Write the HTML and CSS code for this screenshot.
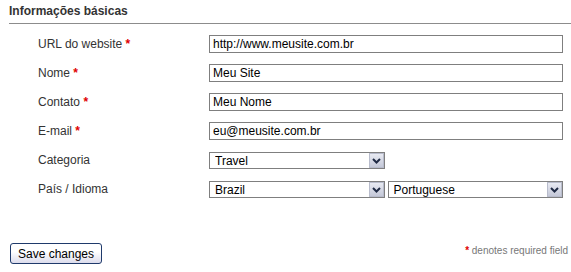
FILE: index.html
```html
<!DOCTYPE html>
<html lang="pt-BR">
<head>
    <meta charset="UTF-8">
    <title>Informações básicas</title>
    <link rel="stylesheet" href="styles.css">
</head>
<body>
    <h2 class="section-title">Informações básicas</h2>

    <form class="basic-form">
        <div class="fields">
            <label class="field-label">URL do website <span class="req">*</span></label>
            <div class="field"><input class="text-input" type="text" value="http://www.meusite.com.br"></div>

            <label class="field-label">Nome <span class="req">*</span></label>
            <div class="field"><input class="text-input" type="text" value="Meu Site"></div>

            <label class="field-label">Contato <span class="req">*</span></label>
            <div class="field"><input class="text-input" type="text" value="Meu Nome"></div>

            <label class="field-label">E-mail <span class="req">*</span></label>
            <div class="field"><input class="text-input" type="text" value="eu@meusite.com.br"></div>

            <label class="field-label">Categoria</label>
            <div class="field">
                <div class="select-wrap">
                    <select class="select-input"><option>Travel</option></select>
                    <span class="select-arrow"><svg width="9" height="6" viewBox="0 0 9 6"><path d="M1 1 L4.5 4.5 L8 1" fill="none" stroke="#1f2a44" stroke-width="2"/></svg></span>
                </div>
            </div>

            <label class="field-label">País / Idioma</label>
            <div class="field field-pair">
                <div class="select-wrap">
                    <select class="select-input"><option>Brazil</option></select>
                    <span class="select-arrow"><svg width="9" height="6" viewBox="0 0 9 6"><path d="M1 1 L4.5 4.5 L8 1" fill="none" stroke="#1f2a44" stroke-width="2"/></svg></span>
                </div>
                <div class="select-wrap">
                    <select class="select-input"><option>Portuguese</option></select>
                    <span class="select-arrow"><svg width="9" height="6" viewBox="0 0 9 6"><path d="M1 1 L4.5 4.5 L8 1" fill="none" stroke="#1f2a44" stroke-width="2"/></svg></span>
                </div>
            </div>
        </div>

        <div class="form-footer">
            <button type="button" class="save-btn">Save changes</button>
            <p class="req-note"><span class="req">*</span> denotes required field</p>
        </div>
    </form>
</body>
</html>
```

FILE: styles.css
```css
body {
    margin: 0;
    padding: 4px 0 0 9px;
    font-family: 'Liberation Sans', Arial, sans-serif;
    font-size: 12px;
    color: #333;
    background: #fff;
}

.section-title {
    margin: 0;
    padding: 0 0 5px 0;
    font-size: 12px;
    font-weight: bold;
    color: #333;
    border-bottom: 1px solid #8c8c8c;
}

.basic-form {
    margin: 0;
}

.fields {
    display: grid;
    grid-template-columns: 171px 354px;
    grid-auto-rows: 29px;
    padding: 11px 0 0 29px;
}

.field-label {
    display: block;
    height: 18px;
    line-height: 18px;
    color: #333;
}

.req {
    color: #e00000;
    font-weight: bold;
}

.field {
    display: flex;
    height: 18px;
}

.text-input {
    box-sizing: border-box;
    width: 100%;
    height: 18px;
    margin: 0;
    padding: 0 3px;
    border: 1px solid #7f7f7f;
    font-family: 'Liberation Sans', Arial, sans-serif;
    font-size: 12px;
    color: #000;
    background: #fff;
}

.select-wrap {
    position: relative;
    width: 176px;
    height: 17px;
    margin-top: 1px;
}

.field-pair {
    gap: 3px;
}

.select-input {
    appearance: none;
    -webkit-appearance: none;
    box-sizing: border-box;
    width: 100%;
    height: 17px;
    margin: 0;
    padding: 0 0 0 5px;
    border: 1px solid #7f7f7f;
    border-radius: 0;
    font-family: 'Liberation Sans', Arial, sans-serif;
    font-size: 12px;
    color: #000;
    background: #fff;
}

.select-arrow {
    position: absolute;
    top: 1px;
    right: 1px;
    width: 15px;
    height: 15px;
    box-sizing: border-box;
    border: 1px solid #b8bccc;
    background: linear-gradient(#e8eaf2, #c4c8d8);
    display: flex;
    align-items: center;
    justify-content: center;
    pointer-events: none;
}

.form-footer {
    display: flex;
    justify-content: space-between;
    align-items: center;
    margin-top: 34px;
    padding-right: 3px;
}

.save-btn {
    width: 92px;
    height: 21px;
    margin: 0 0 0 1px;
    padding: 0;
    border: 1px solid #1f3a6b;
    border-radius: 3px;
    background: linear-gradient(#ffffff 40%, #dcdcec);
    font-family: 'Liberation Sans', Arial, sans-serif;
    font-size: 12px;
    color: #000;
}

.req-note {
    margin: 0 0 6px 0;
    font-size: 10px;
    color: #777;
}
```
